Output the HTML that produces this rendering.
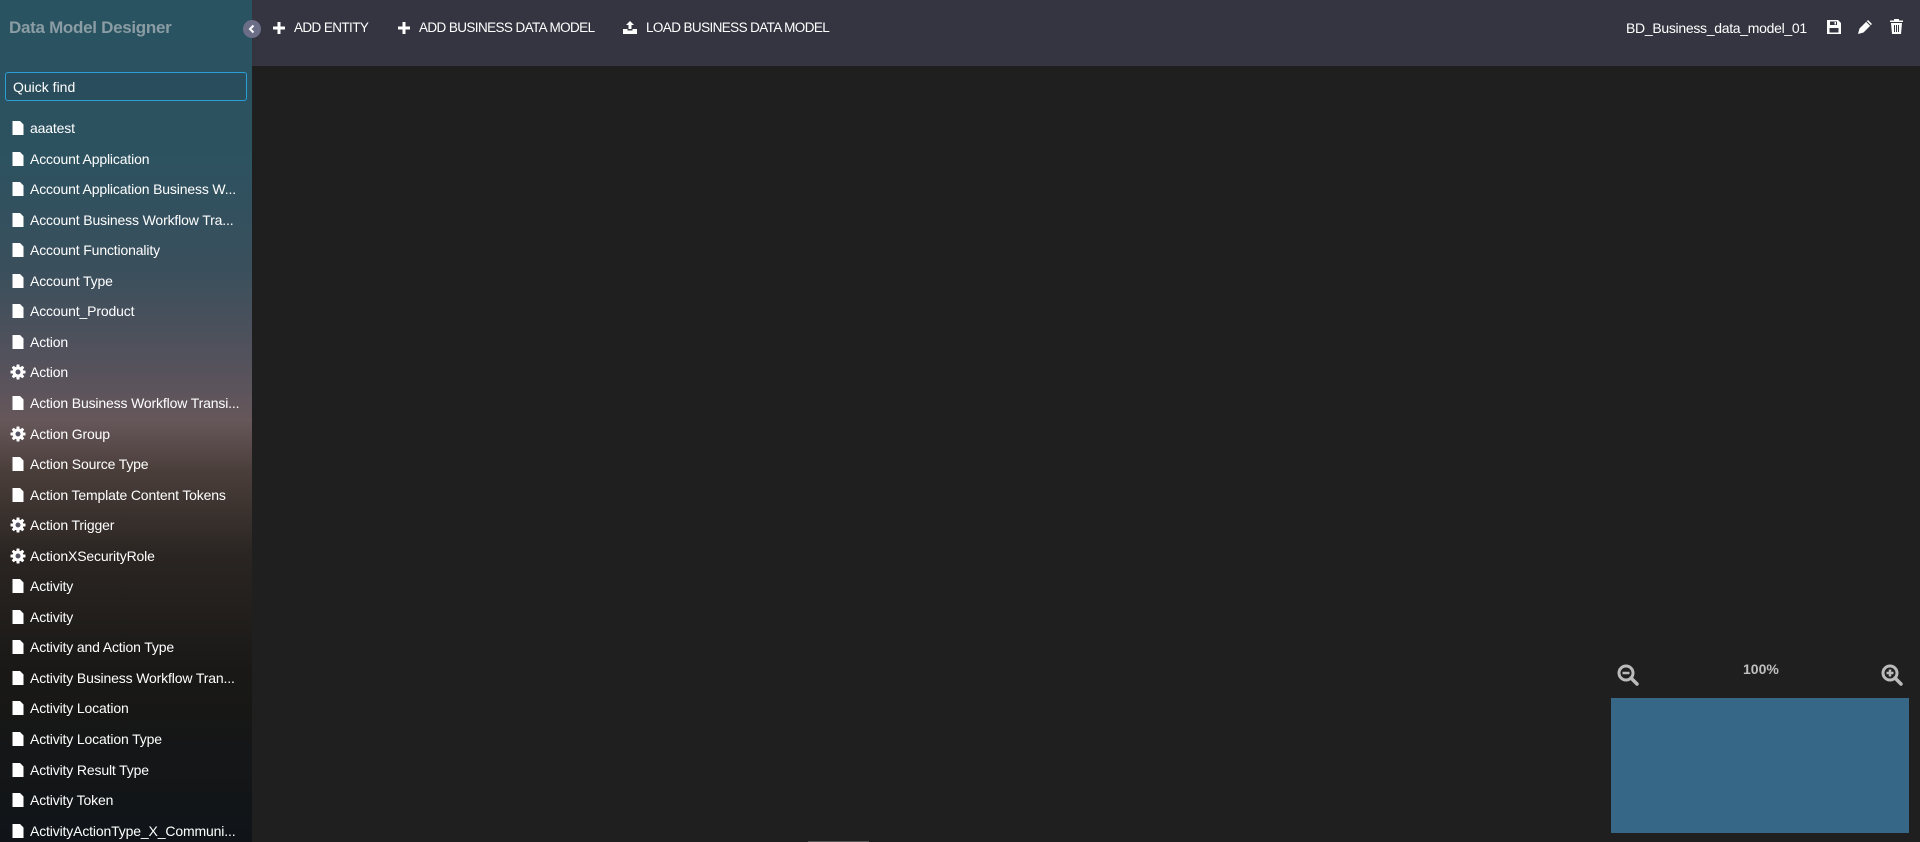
<!DOCTYPE html>
<html><head><meta charset="utf-8">
<style>
*{margin:0;padding:0;box-sizing:border-box}
html,body{width:1920px;height:842px;overflow:hidden;background:#1f1f1f;font-family:"Liberation Sans",sans-serif}
#side{position:absolute;left:0;top:0;width:252px;height:842px;
background:linear-gradient(180deg,#2a5361 0%,#2c5260 18%,#3a4f5c 32%,#56525c 44%,#66575a 50%,#4a3e3a 56%,#2a2522 66%,#191816 80%,#101418 100%);}
#title{position:absolute;left:9px;top:18px;font-size:17px;font-weight:bold;color:#8a9ca4;letter-spacing:-0.3px}
#tog{position:absolute;left:243px;top:20px;width:18px;height:18px;border-radius:50%;background:#6b6e86;z-index:3}
#qf{position:absolute;left:5px;top:72px;width:242px;height:29px;border:1px solid #2a9fd6;border-radius:3px;color:#fff;font-size:14px;padding:6px 7px;background:rgba(40,70,85,.4)}
.it{position:absolute;left:11px;height:20px;color:#fff;font-size:14px;white-space:nowrap;display:flex;align-items:center;letter-spacing:-0.15px}
.it svg{width:14px;height:14px;margin-right:5px;flex:none}
#hdr{position:absolute;left:252px;top:0;width:1668px;height:66px;background:#353541}
.btn{position:absolute;top:20px;color:#fff;font-size:13.5px;display:flex;align-items:center;letter-spacing:-0.6px}
.btn svg{margin-right:9px}
#mm{position:absolute;left:1611px;top:698px;width:298px;height:135px;background:#366786}
</style></head><body>
<div id="side">
<div id="title">Data Model Designer</div>
<div id="qf">Quick find</div>
</div>
<div id="hdr">
<div class="btn" style="left:21px"><svg width="12" height="12" viewBox="0 0 12 12"><path d="M4.5 0h3v4.5H12v3H7.5V12h-3V7.5H0v-3h4.5z" fill="#fff"/></svg>ADD ENTITY</div>
<div class="btn" style="left:146px"><svg width="12" height="12" viewBox="0 0 12 12"><path d="M4.5 0h3v4.5H12v3H7.5V12h-3V7.5H0v-3h4.5z" fill="#fff"/></svg>ADD BUSINESS DATA MODEL</div>
<div class="btn" style="left:371px"><svg width="14" height="13" viewBox="0 0 14 13"><path d="M7 0l4 4H8.5v4h-3V4H3z M0 8h4.5v1.5h5V8H14v5H0z" fill="#fff"/></svg>LOAD BUSINESS DATA MODEL</div>
<div style="position:absolute;left:1374px;top:20px;color:#fff;font-size:14px;letter-spacing:-0.3px">BD_Business_data_model_01</div>
<svg style="position:absolute;left:1575px;top:20px" width="14" height="14" viewBox="0 0 14 14"><path d="M0 0h11l3 3v11H0z" fill="#fff"/><rect x="3" y="1.5" width="7" height="3.5" fill="#353541"/><rect x="2.5" y="8" width="9" height="4.5" fill="#353541"/><rect x="7.5" y="2" width="1.5" height="2.5" fill="#fff"/></svg>
<svg style="position:absolute;left:1606px;top:20px" width="14" height="14" viewBox="0 0 14 14"><path d="M10 0l4 4-8.5 8.5L0 14l1.5-5.5z" fill="#fff"/><path d="M8.5 1.5l4 4" stroke="#353541" stroke-width="1"/></svg>
<svg style="position:absolute;left:1638px;top:19px" width="13" height="15" viewBox="0 0 13 15"><path d="M4 0h5v1.5h4V3H0V1.5h4z M1 4h11l-1 11H2z" fill="#fff"/><path d="M4.5 6v7M6.5 6v7M8.5 6v7" stroke="#353541" stroke-width="1"/></svg>
</div>
<svg id="tog" viewBox="0 0 18 18" style="background:#6b6e86"><path d="M10.5 5.5L7 9l3.5 3.5" stroke="#fff" stroke-width="2" fill="none"/></svg>
<div id="list"></div>
<div style="position:absolute;left:1743px;top:661px;color:#c0c0c0;font-size:14px;font-weight:bold">100%</div>
<svg style="position:absolute;left:1617px;top:664px" width="22" height="22" viewBox="0 0 22 22"><circle cx="9" cy="9" r="7" stroke="#bbb" stroke-width="3" fill="none"/><path d="M14 14l6 6" stroke="#bbb" stroke-width="3.5" stroke-linecap="round"/><path d="M5.5 9h7" stroke="#bbb" stroke-width="2.5"/></svg>
<svg style="position:absolute;left:1881px;top:664px" width="22" height="22" viewBox="0 0 22 22"><circle cx="9" cy="9" r="7" stroke="#bbb" stroke-width="3" fill="none"/><path d="M14 14l6 6" stroke="#bbb" stroke-width="3.5" stroke-linecap="round"/><path d="M5.5 9h7M9 5.5v7" stroke="#bbb" stroke-width="2.5"/></svg>
<div id="mm"></div>
<div style="position:absolute;left:808px;top:841px;width:61px;height:1px;background:#555"></div>
<script>
var items=[["f","aaatest"],["f","Account Application"],["f","Account Application Business W..."],["f","Account Business Workflow Tra..."],["f","Account Functionality"],["f","Account Type"],["f","Account_Product"],["f","Action"],["g","Action"],["f","Action Business Workflow Transi..."],["g","Action Group"],["f","Action Source Type"],["f","Action Template Content Tokens"],["g","Action Trigger"],["g","ActionXSecurityRole"],["f","Activity"],["f","Activity"],["f","Activity and Action Type"],["f","Activity Business Workflow Tran..."],["f","Activity Location"],["f","Activity Location Type"],["f","Activity Result Type"],["f","Activity Token"],["f","ActivityActionType_X_Communi..."]];
var fi='<svg viewBox="0 0 14 14"><path d="M1.5 0h7.5l3.5 3.5V14h-11z" fill="#fff"/></svg>';
var gi='<svg viewBox="0 0 16 16" style="width:16px;height:16px;margin-left:-1px;margin-right:4px"><g fill="#fff"><circle cx="8" cy="8" r="5.5"/><rect x="6.5" y="0.5" width="3" height="15" rx=".5"/><rect x="6.5" y="0.5" width="3" height="15" rx=".5" transform="rotate(45 8 8)"/><rect x="6.5" y="0.5" width="3" height="15" rx=".5" transform="rotate(90 8 8)"/><rect x="6.5" y="0.5" width="3" height="15" rx=".5" transform="rotate(135 8 8)"/></g><circle cx="8" cy="8" r="2.5" fill="#556"/></svg>';
var h='';
items.forEach(function(it,i){h+='<div class="it" style="top:'+(118+i*30.55)+'px">'+(it[0]=="f"?fi:gi)+it[1]+'</div>';});
document.getElementById('list').innerHTML=h;
</script>
</body></html>
